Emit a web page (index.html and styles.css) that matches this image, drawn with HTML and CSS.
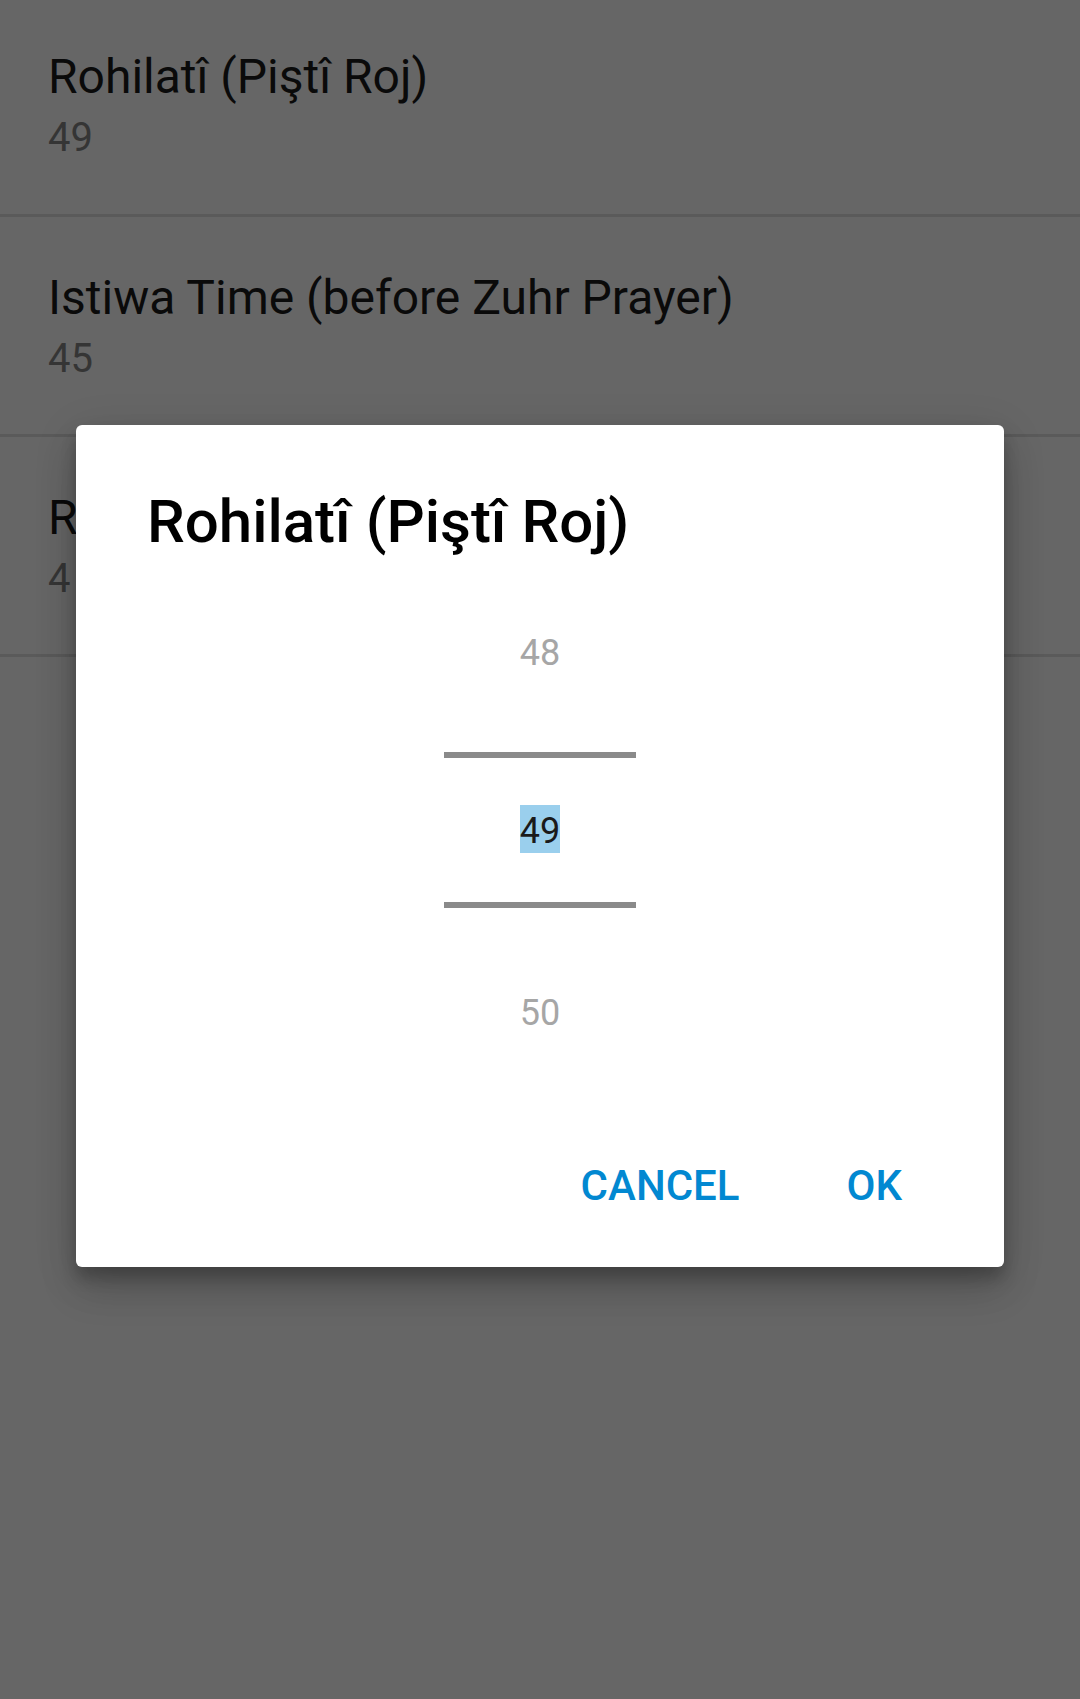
FILE: index.html
```html
<!DOCTYPE html>
<html lang="ku">
<head>
<meta charset="utf-8">
<title>Preferences</title>
<link rel="stylesheet" href="styles.css">
</head>
<body>
<div class="screen">
  <ul class="pref-list">
    <li class="pref pref-first">
      <div class="pref-title">Rohilatî (Piştî Roj)</div>
      <div class="pref-summary">49</div>
    </li>
    <li class="pref">
      <div class="pref-title">Istiwa Time (before Zuhr Prayer)</div>
      <div class="pref-summary">45</div>
    </li>
    <li class="pref">
      <div class="pref-title">Rojava (Berî Roj)</div>
      <div class="pref-summary">4</div>
    </li>
  </ul>

  <div class="dialog" role="dialog">
    <h1 class="dialog-title">Rohilatî (Piştî Roj)</h1>
    <div class="picker">
      <div class="picker-item picker-dim picker-prev">48</div>
      <div class="picker-divider"></div>
      <div class="picker-item picker-current"><span class="picker-selected">49</span></div>
      <div class="picker-divider"></div>
      <div class="picker-item picker-dim picker-next">50</div>
    </div>
    <div class="dialog-actions">
      <button class="btn btn-cancel">CANCEL</button>
      <button class="btn btn-ok">OK</button>
    </div>
  </div>
</div>
</body>
</html>
```
FILE: styles.css
```css
html, body {
  margin: 0;
  padding: 0;
  background: #666666;
}

body {
  font-family: Roboto, "Noto Sans", "Liberation Sans", sans-serif;
  width: 1080px;
  height: 1699px;
  overflow: hidden;
}

.screen {
  position: relative;
  width: 1080px;
  height: 1699px;
  background: #666666;
}

.pref-list {
  list-style: none;
  margin: 0;
  padding: 0;
}

.pref {
  height: 220px;
  box-sizing: border-box;
  padding: 53px 48px 0 48px;
  border-bottom: 3px solid #5a5a5a;
}

.pref-first {
  height: 217px;
  padding-top: 49px;
}

.pref-title {
  font-size: 48px;
  line-height: 56px;
  color: #0a0a0a;
  white-space: nowrap;
}

.pref-summary {
  font-size: 40px;
  line-height: 66px;
  color: #353535;
}

.dialog {
  position: absolute;
  top: 425px;
  left: 76px;
  width: 928px;
  height: 842px;
  box-sizing: border-box;
  background: #ffffff;
  border-radius: 6px;
  padding: 62px 0 0 0;
  box-shadow: 0 24px 38px rgba(0,0,0,0.14), 0 9px 46px rgba(0,0,0,0.12), 0 11px 15px rgba(0,0,0,0.20);
}

.dialog-title {
  margin: 0;
  padding: 0 71px;
  font-size: 60px;
  line-height: 70px;
  font-weight: 500;
  color: #000000;
  white-space: nowrap;
}

.picker {
  width: 192px;
  margin: 70px auto 0 auto;
  display: flex;
  flex-direction: column;
  align-items: stretch;
}

.picker-item {
  height: 48px;
  box-sizing: border-box;
  padding-top: 4px;
  line-height: 44px;
  font-size: 36px;
  text-align: center;
}

.picker-dim {
  color: #a6a6a6;
}

.picker-prev {
  margin-bottom: 77px;
}

.picker-current {
  margin: 47px 0 49px 0;
  padding-top: 0;
  color: #1a1a1a;
}

.picker-next {
  margin-top: 79px;
}

.picker-selected {
  display: inline-block;
  box-sizing: border-box;
  background: #9acfed;
  height: 48px;
  padding-top: 4px;
  line-height: 44px;
}

.picker-divider {
  height: 6px;
  background: #8a8a8a;
}

.dialog-actions {
  display: flex;
  justify-content: flex-end;
  align-items: center;
  margin-top: 127px;
  padding-right: 78px;
  gap: 59px;
}

.btn {
  border: none;
  background: transparent;
  padding: 0 24px;
  margin: 0;
  font-family: Roboto, "Noto Sans", "Liberation Sans", sans-serif;
  font-size: 42px;
  line-height: 48px;
  height: 48px;
  font-weight: 500;
  color: #0288d1;
}
```
